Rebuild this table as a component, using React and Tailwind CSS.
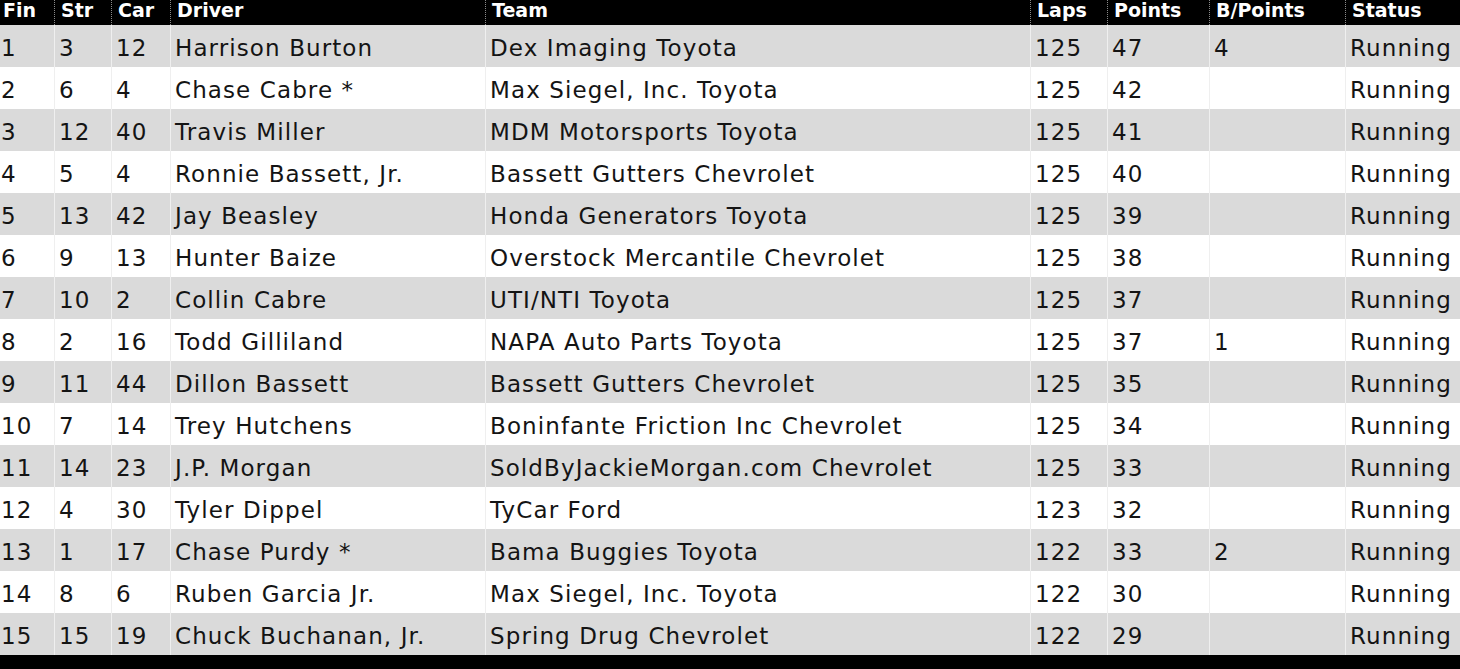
import React from "react";

const COLUMNAS = [
  { titulo: "Fin", ancho: "w-[54px]" },
  { titulo: "Str", ancho: "w-[57px]" },
  { titulo: "Car", ancho: "w-[59px]" },
  { titulo: "Driver", ancho: "w-[315px]" },
  { titulo: "Team", ancho: "w-[545px]" },
  { titulo: "Laps", ancho: "w-[77px]" },
  { titulo: "Points", ancho: "w-[102px]" },
  { titulo: "B/Points", ancho: "w-[136px]" },
  { titulo: "Status", ancho: "w-[115px]" },
];

const RESULTADOS = [
  ["1", "3", "12", "Harrison Burton", "Dex Imaging Toyota", "125", "47", "4", "Running"],
  ["2", "6", "4", "Chase Cabre *", "Max Siegel, Inc. Toyota", "125", "42", "", "Running"],
  ["3", "12", "40", "Travis Miller", "MDM Motorsports Toyota", "125", "41", "", "Running"],
  ["4", "5", "4", "Ronnie Bassett, Jr.", "Bassett Gutters Chevrolet", "125", "40", "", "Running"],
  ["5", "13", "42", "Jay Beasley", "Honda Generators Toyota", "125", "39", "", "Running"],
  ["6", "9", "13", "Hunter Baize", "Overstock Mercantile Chevrolet", "125", "38", "", "Running"],
  ["7", "10", "2", "Collin Cabre", "UTI/NTI Toyota", "125", "37", "", "Running"],
  ["8", "2", "16", "Todd Gilliland", "NAPA Auto Parts Toyota", "125", "37", "1", "Running"],
  ["9", "11", "44", "Dillon Bassett", "Bassett Gutters Chevrolet", "125", "35", "", "Running"],
  ["10", "7", "14", "Trey Hutchens", "Boninfante Friction Inc Chevrolet", "125", "34", "", "Running"],
  ["11", "14", "23", "J.P. Morgan", "SoldByJackieMorgan.com Chevrolet", "125", "33", "", "Running"],
  ["12", "4", "30", "Tyler Dippel", "TyCar Ford", "123", "32", "", "Running"],
  ["13", "1", "17", "Chase Purdy *", "Bama Buggies Toyota", "122", "33", "2", "Running"],
  ["14", "8", "6", "Ruben Garcia Jr.", "Max Siegel, Inc. Toyota", "122", "30", "", "Running"],
  ["15", "15", "19", "Chuck Buchanan, Jr.", "Spring Drug Chevrolet", "122", "29", "", "Running"],
];

export default function App() {
  return (
    <div className="w-[1460px] h-[669px] bg-black overflow-hidden font-['DejaVu_Sans',Verdana,sans-serif]">
      {/* cabecera */}
      <div className="flex h-[25px] bg-black text-white">
        {COLUMNAS.map((c, i) => (
          <div
            key={c.titulo}
            className={`${c.ancho} shrink-0 h-[25px] text-[19px] font-bold leading-[21px] whitespace-nowrap ${
              i === 0 ? "pl-[3px]" : "pl-[6px] border-l border-dotted border-[#8a8a8a]"
            }`}
          >
            {c.titulo}
          </div>
        ))}
      </div>

      {RESULTADOS.map((fila, r) => (
        <div key={fila[0]} className={`flex h-[42px] ${r % 2 === 0 ? "bg-[#dadada]" : "bg-white"}`}>
          {fila.map((valor, i) => (
            <div
              key={i}
              className={`${COLUMNAS[i].ancho} shrink-0 h-[42px] pt-[5px] leading-[37px] text-[23px] tracking-[1.1px] text-[#141414] whitespace-nowrap ${
                i === 0 ? "pl-[1px]" : "pl-[4px] border-l border-[#efefef]"
              }`}
            >
              {valor}
            </div>
          ))}
        </div>
      ))}
    </div>
  );
}
